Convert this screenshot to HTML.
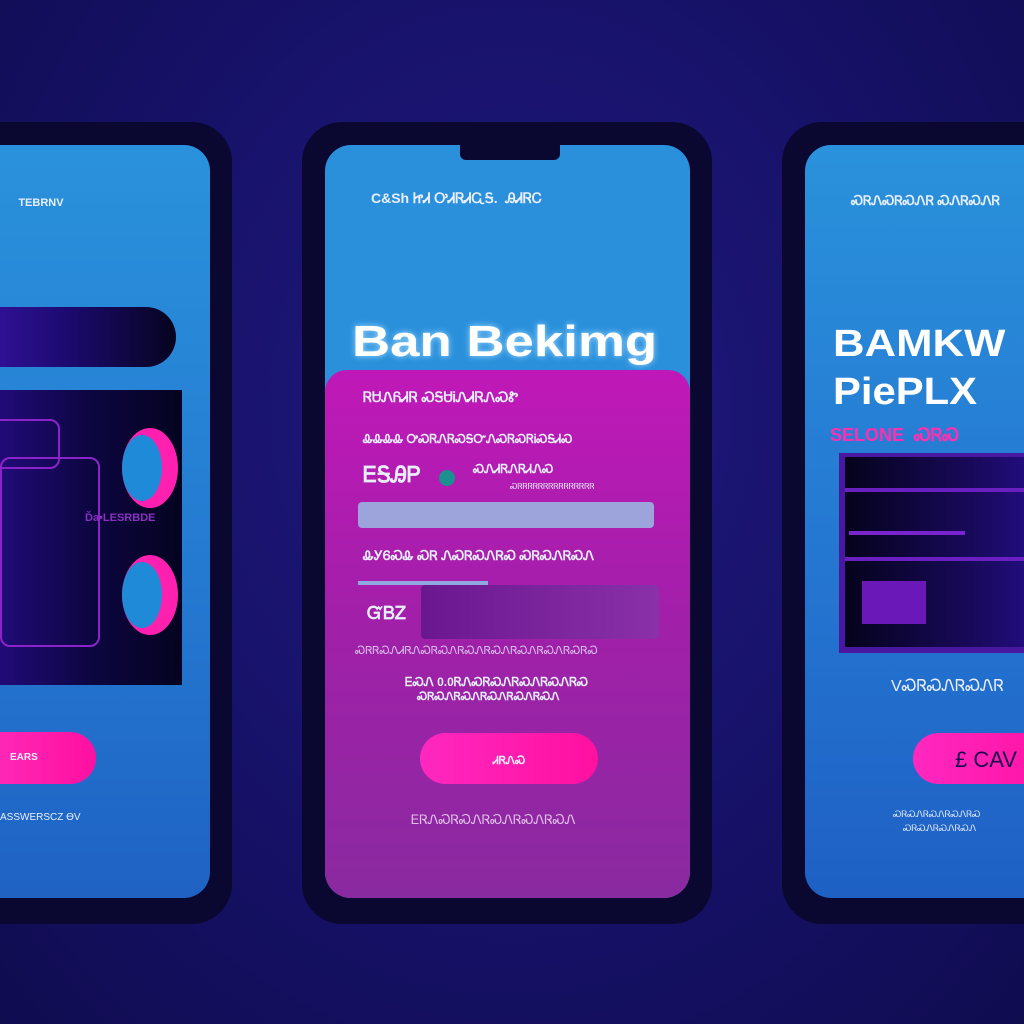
<!DOCTYPE html>
<html><head><style>
*{margin:0;padding:0;box-sizing:border-box}
body{width:1024px;height:1024px;overflow:hidden;position:relative;background:radial-gradient(ellipse at 50% 40%,#221a80 0%,#17126a 50%,#100c50 100%);font-family:"Liberation Sans",sans-serif;color:#fff}
.a{position:absolute}
.frame{position:absolute;background:#0a0830;border-radius:40px}
.scr{position:absolute;border-radius:26px;overflow:hidden}
.t{position:absolute;white-space:nowrap;font-weight:bold;color:#e8eefc}
</style></head><body>
<div class="frame" style="left:-60px;top:122px;width:292px;height:802px"></div>
<div class="scr" style="left:-40px;top:145px;width:250px;height:753px;background:linear-gradient(#2a92dc,#2478d0 60%,#1f62c4)">
 <div class="t" style="left:40px;top:52px;font-size:11px">&nbsp;&nbsp;&nbsp;&nbsp;&nbsp;&nbsp;TEBRNV</div>
 <div class="a" style="left:0;top:162px;width:216px;height:60px;border-radius:0 30px 30px 0;background:linear-gradient(90deg,#3a14a8,#1c0a70 50%,#06041e)"></div>
 <div class="a" style="left:0;top:245px;width:222px;height:295px;background:linear-gradient(90deg,#2a0c90,#0c0640 60%,#050320)"></div>
 <div class="a" style="left:30px;top:274px;width:70px;height:50px;border:2px solid #8a24c8;border-radius:10px"></div>
 <div class="a" style="left:40px;top:312px;width:100px;height:190px;border:2px solid #8a24c8;border-radius:10px"></div>
 <div class="t" style="left:125px;top:367px;font-size:11px;color:#8a30c0">Ďa•LESRBDE</div>
 <div class="a" style="left:162px;top:283px;width:56px;height:80px;border-radius:50%;background:#ff20b0"></div>
 <div class="a" style="left:162px;top:290px;width:40px;height:66px;border-radius:50%;background:#1e8ad8"></div>
 <div class="a" style="left:162px;top:410px;width:56px;height:80px;border-radius:50%;background:#ff20b0"></div>
 <div class="a" style="left:162px;top:417px;width:40px;height:66px;border-radius:50%;background:#1e8ad8"></div>
 <div class="a" style="left:0;top:587px;width:136px;height:52px;border-radius:0 26px 26px 0;background:linear-gradient(90deg,#ff30c0,#ff10a0)"></div>
 <div class="t" style="left:50px;top:607px;font-size:10px">EARS</div>
 <div class="t" style="left:40px;top:667px;font-size:10px;font-weight:normal">ASSWERSCZ ϴV</div>
</div>
<div class="frame" style="left:302px;top:122px;width:410px;height:802px"></div>
<div class="scr" style="left:325px;top:145px;width:365px;height:753px;background:#2a90dc">
 <div class="a" style="left:135px;top:0;width:100px;height:15px;background:#0a0830;border-radius:0 0 6px 6px"></div>
 <div class="t" style="left:46px;top:45px;font-size:14px">C&amp;Sh ᏥᏗ ᎤᏗᏒᏗᏩᎦ. &nbsp;ᎯᏗᏒᏟ</div>
 <div class="t" style="left:27px;top:172px;font-size:44px;color:#fff;text-shadow:0 0 6px #a0d8ff;transform:scaleX(1.2);transform-origin:left">Ban Bekimg</div>
 <div class="a" style="left:0;top:225px;width:365px;height:528px;border-radius:22px 22px 0 0;background:linear-gradient(#c018b8,#a020a8 50%,#8a2aa0)"></div>
 <div class="t" style="left:38px;top:244px;font-size:14px">ᏒᏌᏁᏲᏗᏒ ᏍᎦᏌᎥᏁᏗᏒᏁᏍᏑ</div>
 <div class="t" style="left:38px;top:287px;font-size:12px">ᎲᎲᎲᎲ ᎤᏍᏒᏁᏒᏍᎦᏅᏁᏍᏒᏍᏒᎥᏍᎦᏗᏍ</div>
 <div class="t" style="left:38px;top:317px;font-size:22px">ᎬᎦᎯᏢ</div>
 <div class="a" style="left:114px;top:325px;width:16px;height:16px;border-radius:50%;background:#1a9090"></div>
 <div class="t" style="left:148px;top:317px;font-size:12px">ᏍᏁᏗᏒᏁᏒᏗᏁᏍ</div>
 <div class="t" style="left:185px;top:337px;font-size:8px;font-weight:normal">ᏍᏒᏒᏒᏒᏒᏒᏒᏒᏒᏒᏒᏒᏒᏒᏒ</div>
 <div class="a" style="left:33px;top:357px;width:296px;height:26px;border-radius:4px;background:#9da4dc"></div>
 <div class="t" style="left:38px;top:403px;font-size:13px">ᎲᎩᏮᏍᎲ ᏍᏒ ᏁᏍᏒᏍᏁᏒᏍ ᏍᏒᏍᏁᏒᏍᏁ</div>
 <div class="a" style="left:33px;top:436px;width:130px;height:4px;background:#90a8e0"></div>
 <div class="a" style="left:96px;top:440px;width:238px;height:54px;border-radius:4px;background:linear-gradient(90deg,#6a1890,#8a30a8)"></div>
 <div class="t" style="left:42px;top:458px;font-size:18px">ᏳᏴᏃ</div>
 <div class="t" style="left:30px;top:500px;font-size:11px;font-weight:normal;color:#d8c0ec">ᏍᏒᏒᏍᏁᏗᏒᏁᏍᏒᏍᏁᏒᏍᏁᏒᏍᏁᏒᏍᏁᏒᏍᏁᏒᏍᏒᏍ</div>
 <div class="t" style="left:80px;top:530px;font-size:12px">ᎬᏍᏁ 0.0ᏒᏁᏍᏒᏍᏁᏒᏍᏁᏒᏍᏁᏒᏍ</div>
 <div class="t" style="left:92px;top:546px;font-size:11px">ᏍᏒᏍᏁᏒᏍᏁᏒᏍᏁᏒᏍᏁᏒᏍᏁ</div>
 <div class="a" style="left:95px;top:588px;width:178px;height:51px;border-radius:26px;background:linear-gradient(90deg,#ff28c0,#ff10a0)"></div>
 <div class="t" style="left:168px;top:610px;font-size:11px">ᏗᏒᏁᏍ</div>
 <div class="t" style="left:86px;top:667px;font-size:13px;font-weight:normal;color:#e0c0e8">ᎬᏒᏁᏍᏒᏍᏁᏒᏍᏁᏒᏍᏁᏒᏍᏁ</div>
</div>
<div class="frame" style="left:782px;top:122px;width:300px;height:802px"></div>
<div class="scr" style="left:805px;top:145px;width:260px;height:753px;background:linear-gradient(#2a92dc,#2474d0 60%,#1e60c4)">
 <div class="t" style="left:46px;top:48px;font-size:13px">ᏍᏒᏁᏍᏒᏍᏁᏒ ᏍᏁᏒᏍᏁᏒ</div>
 <div class="t" style="left:28px;top:178px;font-size:38px;color:#fff;transform:scaleX(1.15);transform-origin:left">BAMKW</div>
 <div class="t" style="left:28px;top:226px;font-size:38px;color:#fff;transform:scaleX(1.1);transform-origin:left">PiePLX</div>
 <div class="t" style="left:25px;top:280px;font-size:18px;color:#ff30b0">SELONE &nbsp;ᏍᏒᏍ</div>
 <div class="a" style="left:34px;top:308px;width:230px;height:200px;background:#4a18a0"></div>
 <div class="a" style="left:40px;top:312px;width:230px;height:190px;background:linear-gradient(90deg,#05031c,#1a0a60 60%,#2a10a0)"></div>
 <div class="a" style="left:40px;top:343px;width:230px;height:4px;background:#6a20c0"></div>
 <div class="a" style="left:44px;top:386px;width:116px;height:4px;background:#7a24d0"></div>
 <div class="a" style="left:40px;top:412px;width:230px;height:4px;background:#6a20c0"></div>
 <div class="a" style="left:57px;top:436px;width:64px;height:43px;background:#6a18b8"></div>
 <div class="t" style="left:86px;top:533px;font-size:16px;font-weight:normal">VᏍᏒᏍᏁᏒᏍᏁᏒ</div>
 <div class="a" style="left:108px;top:588px;width:160px;height:51px;border-radius:26px;background:linear-gradient(90deg,#ff28c0,#ff10a0)"></div>
 <div class="t" style="left:150px;top:602px;font-size:22px;font-weight:normal;color:#1a0a50">£ CAV</div>
 <div class="t" style="left:88px;top:664px;font-size:9px;font-weight:normal">ᏍᏒᏍᏁᏒᏍᏁᏒᏍᏁᏒᏍ</div>
 <div class="t" style="left:98px;top:678px;font-size:9px;font-weight:normal">ᏍᏒᏍᏁᏒᏍᏁᏒᏍᏁ</div>
</div>
</body></html>
